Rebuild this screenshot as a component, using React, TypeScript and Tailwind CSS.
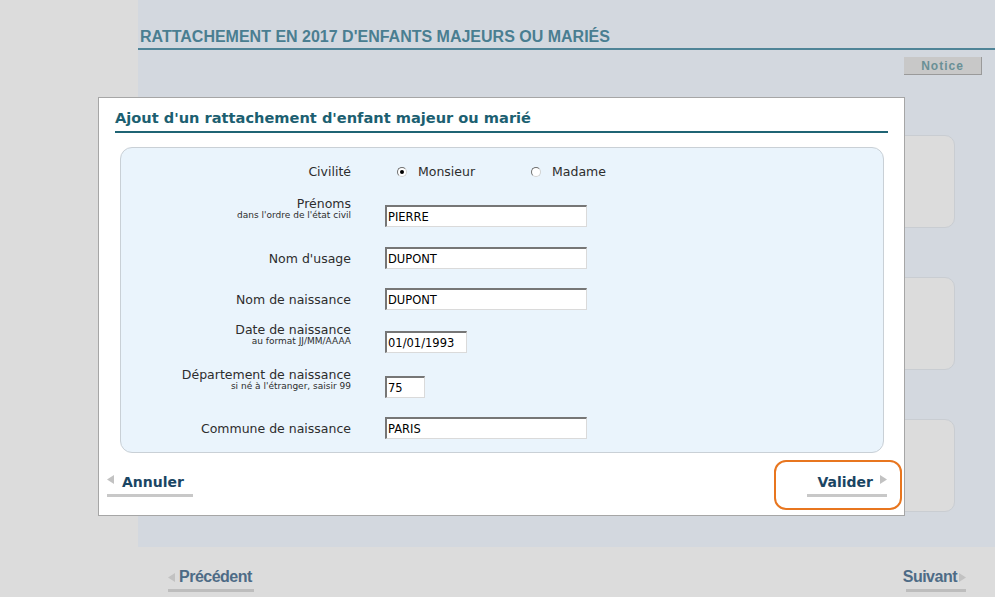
import React from 'react';

const Tri = ({ dir, className }: { dir: 'left' | 'right'; className?: string }) => (
  <svg width="7" height="9" viewBox="0 0 7 9" className={className}>
    <path d={dir === 'left' ? 'M7 0L0 4.5L7 9Z' : 'M0 0L7 4.5L0 9Z'} fill="#c2c2c2" />
  </svg>
);

const Radio = ({ checked }: { checked?: boolean }) => (
  <span className="flex h-[10px] w-[10px] items-center justify-center rounded-full border border-t-[#6e6e6e] border-l-[#6e6e6e] border-b-[#d2d2d2] border-r-[#d2d2d2] bg-white">
    {checked && <span className="h-[4px] w-[4px] rounded-full bg-black" />}
  </span>
);

interface FieldProps {
  label: string;
  sub?: string;
  value: string;
  width: string;
  className?: string;
}

const Field: React.FC<FieldProps> = ({ label, sub, value, width, className }) => (
  <div className={`flex h-[22px] items-center ${className ?? ''}`}>
    <div className={`w-[230px] text-right text-[#2d2d2d] ${sub ? 'mb-[15px]' : ''}`}>
      <div className="text-[12.5px] leading-[13px]">{label}</div>
      {sub && <div className="text-[9px] leading-[11px]">{sub}</div>}
    </div>
    <input
      readOnly
      value={value}
      className={`ml-[34px] h-[22px] ${width} border-t-2 border-l-2 border-b border-r border-t-[#767676] border-l-[#767676] border-b-[#dadada] border-r-[#dadada] bg-white px-[1px] text-[11.5px] text-black outline-none`}
      style={{ fontFamily: '"DejaVu Sans", Verdana, sans-serif' }}
    />
  </div>
);

const Card = ({ className }: { className?: string }) => (
  <div className={`ml-[40px] mr-[40px] h-[93px] rounded-r-[10px] border border-[#c9cdd2] bg-[#dcdcdc] ${className ?? ''}`} />
);

export default function App() {
  return (
    <div
      className="relative h-[597px] w-[995px] overflow-hidden bg-[#dcdcdc]"
      style={{ fontFamily: '"Liberation Sans", Arial, sans-serif' }}
    >
      {/* main column */}
      <div className="ml-[138px] flex h-[547px] flex-col bg-[#d3d8df] pt-[27px]">
        <h1 className="pl-[2px] text-[16px] font-bold leading-[20px] text-[#4a7e91]">
          RATTACHEMENT EN 2017 D'ENFANTS MAJEURS OU MARIÉS
        </h1>
        <div className="mt-[1px] h-[2px] bg-[#4f8497]" />
        <div className="mr-[13px] mt-[7px] flex justify-end">
          <div className="flex h-[18px] w-[78px] items-center justify-center border-b border-r border-b-[#9a9a9a] border-r-[#9a9a9a] bg-[#c8c8c8] text-[12px] font-bold tracking-[1px] text-[#6a9096]">
            Notice
          </div>
        </div>
        <Card className="mt-[60px]" />
        <Card className="mt-[49px]" />
        <Card className="mt-[49px]" />
      </div>

      {/* bottom navigation */}
      <div className="flex justify-between pl-[168px] pr-[29px] pt-[21px]">
        <div className="flex flex-col">
          <div className="flex items-center gap-[4px]">
            <Tri dir="left" />
            <span className="text-[16px] font-bold leading-[18px] tracking-[-0.5px] text-[#4d6b86]">Précédent</span>
          </div>
          <div className="mt-[3px] h-[3px] w-[86px] bg-[#bdbdbd]" />
        </div>
        <div className="flex flex-col items-end">
          <div className="flex items-center gap-[2px]">
            <span className="text-[16px] font-bold leading-[18px] tracking-[-0.5px] text-[#4d6b86]">Suivant</span>
            <Tri dir="right" />
          </div>
          <div className="mt-[3px] h-[3px] w-[60px] bg-[#bdbdbd]" />
        </div>
      </div>

      {/* modal */}
      <div
        className="absolute left-[98px] top-[97px] flex h-[419px] w-[807px] flex-col border border-[#a6a6a6] bg-white"
        style={{ fontFamily: '"DejaVu Sans", Verdana, sans-serif' }}
      >
        <div className="mx-[16px] mt-[10px]">
          <h2 className="text-[14.6px] font-bold leading-[20px] text-[#1c5f71]">
            Ajout d'un rattachement d'enfant majeur ou marié
          </h2>
          <div className="mt-[3px] h-[2px] bg-[#1f6474]" />
        </div>

        <div className="ml-[21px] mr-[20px] mt-[14px] rounded-[12px] border border-[#c9d0d6] bg-[#eaf4fc] pb-[13px] pt-[13px]">
          <div className="flex h-[22px] items-center">
            <div className="w-[230px] text-right text-[12.5px] text-[#2d2d2d]">Civilité</div>
            <div className="ml-[46px] flex w-[134px] items-center gap-[11px] text-[12.5px] text-[#2d2d2d]">
              <Radio checked />
              <span>Monsieur</span>
            </div>
            <div className="flex items-center gap-[11px] text-[12.5px] text-[#2d2d2d]">
              <Radio />
              <span>Madame</span>
            </div>
          </div>
          <Field className="mt-[22px]" label="Prénoms" sub="dans l'ordre de l'état civil" value="PIERRE" width="w-[202px]" />
          <Field className="mt-[20px]" label="Nom d'usage" value="DUPONT" width="w-[202px]" />
          <Field className="mt-[19px]" label="Nom de naissance" value="DUPONT" width="w-[202px]" />
          <Field className="mt-[21px]" label="Date de naissance" sub="au format JJ/MM/AAAA" value="01/01/1993" width="w-[82px]" />
          <Field className="mt-[23px]" label="Département de naissance" sub="si né à l'étranger, saisir 99" value="75" width="w-[40px]" />
          <Field className="mt-[19px]" label="Commune de naissance" value="PARIS" width="w-[202px]" />
        </div>

        <div className="mt-[7px] flex items-start justify-between pl-[8px] pr-[2px]">
          <div className="mt-[13px] flex flex-col">
            <div className="flex items-center">
              <Tri dir="left" className="mb-[5px]" />
              <span className="ml-[8px] text-[14px] font-bold leading-[18px] text-[#1a4563]">Annuler</span>
            </div>
            <div className="mt-[3px] h-[3px] w-[86px] bg-[#c8c8c8]" />
          </div>
          <div className="flex h-[50px] w-[128px] flex-col items-end justify-center rounded-[12px] border-2 border-[#e8761f] pr-[13px]">
            <div className="flex items-center">
              <span className="text-[14px] font-bold leading-[18px] text-[#1a4563]">Valider</span>
              <Tri dir="right" className="mb-[5px] ml-[7px]" />
            </div>
            <div className="mt-[3px] h-[3px] w-[80px] bg-[#c8c8c8]" />
          </div>
        </div>
      </div>
    </div>
  );
}
